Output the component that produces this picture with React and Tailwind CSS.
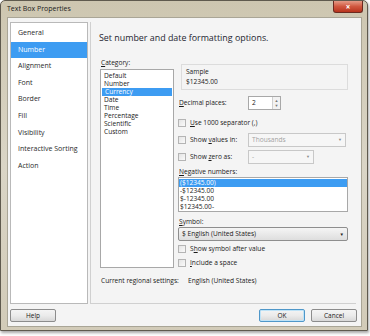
import React from 'react';

const navItems = ['General', 'Number', 'Alignment', 'Font', 'Border', 'Fill', 'Visibility', 'Interactive Sorting', 'Action'];
const categories = ['Default', 'Number', 'Currency', 'Date', 'Time', 'Percentage', 'Scientific', 'Custom'];
const negatives = ['($12345.00)', '-$12345.00', '$-12345.00', '$12345.00-'];

const Check = () => (
  <span className="inline-block w-[8px] h-[8px] border border-[#b4b4b4] bg-gradient-to-br from-[#e4e4e4] to-[#fafafa] mr-[4px] shrink-0" />
);

const Button = ({ children, primary }) => (
  <div
    className={`w-[46px] h-[13px] rounded-[2px] flex items-center justify-center text-[6.5px] text-[#222] bg-gradient-to-b from-[#f4f4f4] via-[#ebebeb] to-[#d8d8d8] border ${
      primary ? 'border-[#4f97c9] shadow-[inset_0_0_0_1px_#bfe3f7]' : 'border-[#8c8c8c]'
    }`}
  >
    {children}
  </div>
);

const App = () => {
  return (
    <div className="w-[370px] h-[336px] bg-white overflow-hidden font-['Open_Sans','Noto_Sans',sans-serif] text-[6.6px] text-[#1a1a1a]">
      <div className="w-[368px] h-[331px] rounded-t-[5px] border border-[#5f5a4e] bg-gradient-to-b from-[#cdc6b0] via-[#dad5c6] to-[#d2cbb8] shadow-[1px_2px_3px_rgba(0,0,0,0.35)]">
        {/* title bar */}
        <div className="h-[16px] flex items-start justify-between">
          <div className="pl-[6px] pt-[3px] text-[7px] text-[#1a1a1a]">Text Box Properties</div>
          <div className="mr-[4px] w-[30px] h-[12px] rounded-b-[3px] border border-t-0 border-[#6b2a20] bg-gradient-to-b from-[#e49a86] via-[#d0573f] to-[#b8321c] flex items-center justify-center text-white text-[8px] font-bold leading-none">
            ×
          </div>
        </div>

        {/* client */}
        <div className="ml-[6px] w-[355px] h-[310px] bg-[#f4f4f4] border border-[#a9a596] pl-[2px] pt-[4px]">
          <div className="flex h-[282px]">
            {/* nav */}
            <div className="w-[78px] h-[282px] bg-white border border-[#b9b9b9] pt-[2px]">
              {navItems.map((item) => (
                <div
                  key={item}
                  className={`h-[16.6px] flex items-center pl-[7px] text-[7px] ${
                    item === 'Number' ? 'bg-[#3d9cf2] text-white' : 'text-[#2a2a2a]'
                  }`}
                >
                  {item}
                </div>
              ))}
            </div>

            {/* right panel */}
            <div className="ml-[2px] w-[266px] h-[282px] border-l border-b border-[#d0d0d0] pl-[8px] pt-[10px]">
              <div className="h-[12px] flex items-center text-[8.9px] text-[#1e2530]">Set number and date formatting options.</div>

              <div className="flex mt-[14px]">
                {/* category column */}
                <div className="w-[74px] ml-[1px]">
                  <div className="h-[10px] flex items-center pl-[1px]">
                    <span><u>C</u>ategory:</span>
                  </div>
                  <div className="mt-[1px] h-[199px] bg-white border border-[#a8a8a8] pt-[2px]">
                    {categories.map((c) => (
                      <div
                        key={c}
                        className={`h-[8px] flex items-center pl-[3px] ${
                          c === 'Currency' ? 'bg-[#3d9cf2] text-white mx-[1px] pl-[2px]' : ''
                        }`}
                      >
                        {c}
                      </div>
                    ))}
                  </div>
                </div>

                {/* right column */}
                <div className="ml-[4px] w-[170px]">
                  <div className="mt-[6px] ml-[3px] h-[26px] border border-[#dcdcdc] pl-[4px] pt-[2px]">
                    <div className="h-[10px] flex items-center">Sample</div>
                    <div className="h-[10px] flex items-center">$12345.00</div>
                  </div>

                  <div className="mt-[6px] h-[14px] flex items-center pl-[1px]">
                    <span className="w-[69px]"><u>D</u>ecimal places:</span>
                    <div className="w-[33px] h-[14px] bg-white border border-[#a8a8a8] flex items-center justify-between">
                      <span className="pl-[3px]">2</span>
                      <div className="w-[8px] h-full border-l border-[#d0d0d0] flex flex-col items-center justify-center text-[4px] text-[#777] leading-[5px] bg-[#f2f2f2]">
                        <span>▲</span>
                        <span>▼</span>
                      </div>
                    </div>
                  </div>

                  <div className="mt-[6px] h-[14px] flex items-center">
                    <Check />
                    <span><u>U</u>se 1000 separator (,)</span>
                  </div>

                  <div className="mt-[3px] h-[14px] flex items-center">
                    <Check />
                    <span className="w-[58px]">Show <u>v</u>alues in:</span>
                    <div className="w-[98px] h-[14px] border border-[#c8c8c8] bg-[#f6f6f6] flex items-center justify-between px-[3px] text-[#a3a3a3]">
                      <span>Thousands</span>
                      <span className="text-[4px] text-[#888]">▼</span>
                    </div>
                  </div>

                  <div className="mt-[3px] h-[14px] flex items-center">
                    <Check />
                    <span className="w-[58px]">Show <u>z</u>ero as:</span>
                    <div className="w-[66px] h-[14px] border border-[#c8c8c8] bg-[#f6f6f6] flex items-center justify-between px-[3px] text-[#a3a3a3]">
                      <span>-</span>
                      <span className="text-[4px] text-[#888]">▼</span>
                    </div>
                  </div>

                  <div className="mt-[3px] h-[10px] flex items-center pl-[1px]">
                    <span><u>N</u>egative numbers:</span>
                  </div>
                  <div className="h-[35px] bg-white border border-[#a8a8a8] pt-[1px]">
                    {negatives.map((n) => (
                      <div
                        key={n}
                        className={`h-[8px] flex items-center pl-[1px] ${
                          n === '($12345.00)' ? 'bg-[#3d9cf2] text-white' : ''
                        }`}
                      >
                        {n}
                      </div>
                    ))}
                  </div>

                  <div className="mt-[5px] h-[10px] flex items-center pl-[1px]">
                    <span><u>S</u>ymbol:</span>
                  </div>
                  <div className="h-[14px] border border-[#8e8e8e] rounded-[2px] bg-gradient-to-b from-[#f5f5f5] to-[#dedede] flex items-center justify-between px-[3px]">
                    <span>$ English (United States)</span>
                    <span className="text-[4.5px] text-[#222]">▼</span>
                  </div>

                  <div className="mt-[3px] h-[10px] flex items-center">
                    <Check />
                    <span>S<u>h</u>ow symbol after value</span>
                  </div>
                  <div className="mt-[4px] h-[10px] flex items-center">
                    <Check />
                    <span><u>I</u>nclude a space</span>
                  </div>
                </div>
              </div>

              <div className="mt-[8px] h-[10px] flex items-center pl-[2px]">
                <span className="w-[87px]">Current regional settings:</span>
                <span>English (United States)</span>
              </div>
            </div>
          </div>

          {/* buttons */}
          <div className="mt-[5px] flex items-center pr-[4px]">
            <Button>Help</Button>
            <div className="ml-auto flex gap-[6px]">
              <Button primary>OK</Button>
              <Button>Cancel</Button>
            </div>
          </div>
        </div>
      </div>
    </div>
  );
};

export default App;
